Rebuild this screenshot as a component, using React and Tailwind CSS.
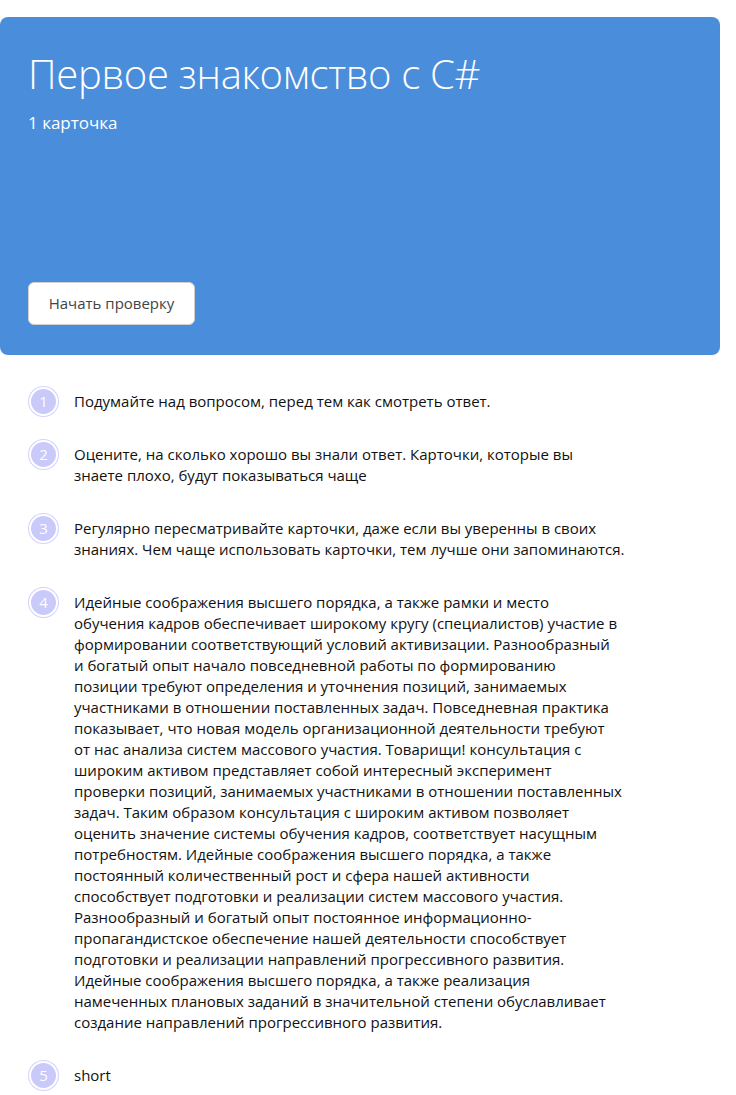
import React from 'react';

const steps = [
  ['Подумайте над вопросом, перед тем как смотреть ответ.'],
  [
    'Оцените, на сколько хорошо вы знали ответ. Карточки, которые вы',
    'знаете плохо, будут показываться чаще',
  ],
  [
    'Регулярно пересматривайте карточки, даже если вы уверенны в своих',
    'знаниях. Чем чаще использовать карточки, тем лучше они запоминаются.',
  ],
  [
    'Идейные соображения высшего порядка, а также рамки и место',
    'обучения кадров обеспечивает широкому кругу (специалистов) участие в',
    'формировании соответствующий условий активизации. Разнообразный',
    'и богатый опыт начало повседневной работы по формированию',
    'позиции требуют определения и уточнения позиций, занимаемых',
    'участниками в отношении поставленных задач. Повседневная практика',
    'показывает, что новая модель организационной деятельности требуют',
    'от нас анализа систем массового участия. Товарищи! консультация с',
    'широким активом представляет собой интересный эксперимент',
    'проверки позиций, занимаемых участниками в отношении поставленных',
    'задач. Таким образом консультация с широким активом позволяет',
    'оценить значение системы обучения кадров, соответствует насущным',
    'потребностям. Идейные соображения высшего порядка, а также',
    'постоянный количественный рост и сфера нашей активности',
    'способствует подготовки и реализации систем массового участия.',
    'Разнообразный и богатый опыт постоянное информационно-',
    'пропагандистское обеспечение нашей деятельности способствует',
    'подготовки и реализации направлений прогрессивного развития.',
    'Идейные соображения высшего порядка, а также реализация',
    'намеченных плановых заданий в значительной степени обуславливает',
    'создание направлений прогрессивного развития.',
  ],
  ['short'],
];

const App = () => {
  return (
    <div className="min-h-screen bg-white pt-[17px] font-['Open_Sans',sans-serif]">
      <div className="w-[720px] h-[338px] rounded-lg bg-[#4a8ddb] px-[28px] pt-[33px] flex flex-col">
        <h1 className="text-[40px] leading-[48px] font-light text-white tracking-[-0.3px]">
          Первое знакомство с C#
        </h1>
        <p className="mt-[14px] text-[17px] leading-[22px] text-white">1 карточка</p>
        <button className="mt-auto mb-[30px] w-[167px] h-[43px] rounded-md bg-white border border-[#d0d0d0] text-[15px] text-[#444]">
          Начать проверку
        </button>
      </div>

      <ol className="pt-[35.5px] pb-[10px] flex flex-col gap-[32px]">
        {steps.map((lines, i) => (
          <li key={i} className="flex items-start">
            <div className="ml-[29px] -my-[4px] w-[29px] h-[29px] shrink-0 rounded-full bg-[#c9c9fa] border-2 border-white ring-1 ring-[#d3d3fb] flex items-center justify-center text-white text-[15px]">
              {i + 1}
            </div>
            <div className="ml-[16px] text-[15px] leading-[21px] text-[#111]">
              {lines.map((l, j) => (
                <div key={j} className="whitespace-nowrap">{l}</div>
              ))}
            </div>
          </li>
        ))}
      </ol>
    </div>
  );
};

export default App;
